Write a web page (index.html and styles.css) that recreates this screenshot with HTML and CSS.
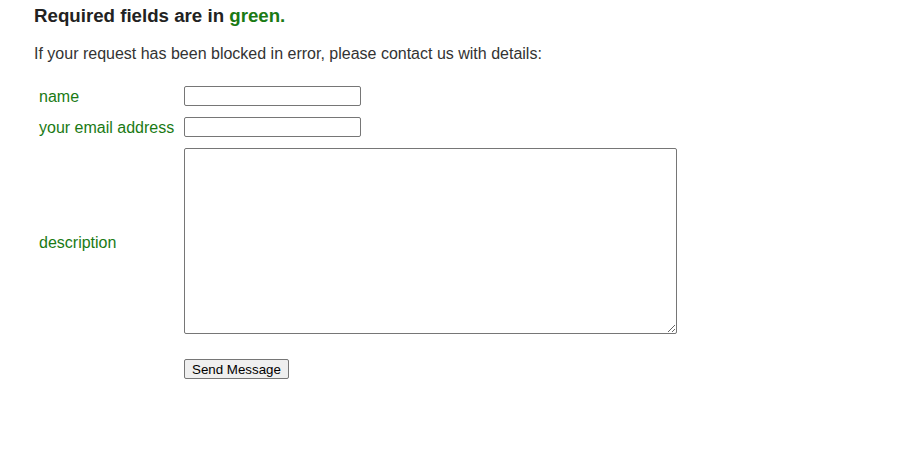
FILE: index.html
```html
<!DOCTYPE html>
<html lang="en">
<head>
  <meta charset="UTF-8" />
  <title>Contact</title>
  <link rel="stylesheet" href="styles.css">
</head>
<body>
  <div class="page">
    <h1>Required fields are in <span class="req">green.</span></h1>
    <p class="intro">If your request has been blocked in error, please contact us with details:</p>

    <form class="contact">
      <label for="name" class="req">name</label>
      <input type="text" id="name" />

      <label for="email" class="req">your email address</label>
      <input type="text" id="email" />

      <label for="desc" class="req desc">description</label>
      <textarea id="desc"></textarea>

      <span></span>
      <div class="actions">
        <button type="button">Send Message</button>
      </div>
    </form>
  </div>
</body>
</html>
```

FILE: styles.css
```css
* {
  box-sizing: border-box;
}

body {
  margin: 0;
  background: #fff;
  font-family: 'Liberation Sans', Arial, sans-serif;
  color: #222;
}

.page {
  padding: 5px 26px 0 34px;
}

h1 {
  font-size: 18.7px;
  line-height: 22px;
  font-weight: 700;
  margin: 0;
}

.req {
  color: #1a7a14;
}

.intro {
  font-size: 16px;
  line-height: 20px;
  color: #333;
  margin: 17px 0 0;
}

.contact {
  display: grid;
  grid-template-columns: 150px auto;
  row-gap: 11px;
  align-items: center;
  justify-content: start;
  margin-top: 22px;
}

.contact label {
  font-size: 16px;
  padding: 2px 0 0 5px;
}

.contact label.desc {
  padding-top: 4px;
}

.contact input[type="text"] {
  width: 177px;
  height: 20px;
  border: 1px solid #767676;
  border-radius: 2px;
  padding: 1px 3px;
  font-size: 13px;
}

.contact textarea {
  width: 493px;
  height: 186px;
  border: 1px solid #767676;
  border-radius: 2px;
  padding: 2px;
  font-family: 'Liberation Mono', monospace;
  font-size: 13px;
}

.actions {
  padding-top: 14px;
}

.actions button {
  font-family: 'Liberation Sans', Arial, sans-serif;
  font-size: 13.33px;
  height: 20px;
  padding: 0 7px;
  color: #000;
  background: #efefef;
  border: 1px solid #767676;
  border-radius: 2px;
}
```
